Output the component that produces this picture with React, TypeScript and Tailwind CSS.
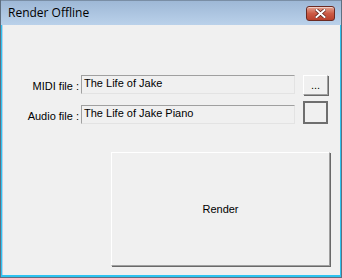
const ui = { fontFamily: '"Liberation Sans", Arial, sans-serif' };

function CloseButton() {
  return (
    <div className="mt-[5px] mr-[6px] flex h-[15px] w-[29px] items-center justify-center rounded-[3px] border border-[#6b2a22] bg-gradient-to-b from-[#e3a291] via-[#cc5b45] to-[#b8402c] shadow-[inset_0_1px_0_rgba(255,255,255,0.5)]">
      <svg width="11" height="9" viewBox="0 0 11 9">
        <path d="M1.5 1 L9.5 8 M9.5 1 L1.5 8" stroke="#5a2018" strokeWidth="3.4" strokeLinecap="square" />
        <path d="M1.5 1 L9.5 8 M9.5 1 L1.5 8" stroke="#ffffff" strokeWidth="2" strokeLinecap="square" />
      </svg>
    </div>
  );
}

function Field({ label, value }: { label: string; value: string }) {
  return (
    <div className="flex items-end">
      <div className="w-[78px] pr-[2px] pb-[2px] text-right text-[11px] leading-none text-black">{label}</div>
      <div className="h-[19px] w-[214px] border border-t-[#a0a0a0] border-l-[#a0a0a0] border-r-[#e3e3e3] border-b-[#e3e3e3] bg-[#f0f0f0] px-[2px] pt-[1px] text-[11px] leading-[13px] text-black">
        {value}
      </div>
    </div>
  );
}

export default function App() {
  return (
    <div
      className="flex h-[278px] w-[342px] flex-col border-x border-b border-[#5f6f80] bg-[#2ec3f0]"
      style={ui}
    >
      {/* title bar */}
      <div className="flex h-[25px] shrink-0 items-start justify-between bg-gradient-to-b from-[#9eb8d6] to-[#bad1ea] border-t border-[#7a8ea5]">
        <span className="ml-[7px] mt-[4px] text-[12px] leading-[15px] text-black" style={{ fontFamily: '"Open Sans", "Noto Sans", sans-serif' }}>
          Render Offline
        </span>
        <CloseButton />
      </div>

      {/* client area */}
      <div className="ml-px mr-px mb-[2px] flex flex-1 flex-col bg-[#f0f0f0] border-l border-[#b9d1ea]">
        <div className="mt-[50px] flex">
          <div className="flex flex-col gap-[11px]">
            <Field label="MIDI file :" value="The Life of Jake" />
            <Field label="Audio file :" value="The Life of Jake Piano" />
          </div>
          <div className="ml-[8px] flex flex-col gap-[6px]">
            <button className="h-[20px] w-[25px] border border-t-white border-l-white border-r-[#a0a0a0] border-b-[#a0a0a0] bg-[#f0f0f0] text-[11px] leading-none text-black shadow-[1px_1px_0_#696969]">
              ...
            </button>
            <button className="h-[23px] w-[25px] border-2 border-[#6e6e6e] bg-[#f0f0f0]" />
          </div>
        </div>
        <div className="mt-[28px] ml-[108px]">
          <button className="flex h-[114px] w-[219px] items-center justify-center border border-t-white border-l-white border-r-[#a0a0a0] border-b-[#a0a0a0] bg-[#f0f0f0] text-[11px] text-black shadow-[1px_1px_0_#696969]">
            Render
          </button>
        </div>
      </div>
    </div>
  );
}
